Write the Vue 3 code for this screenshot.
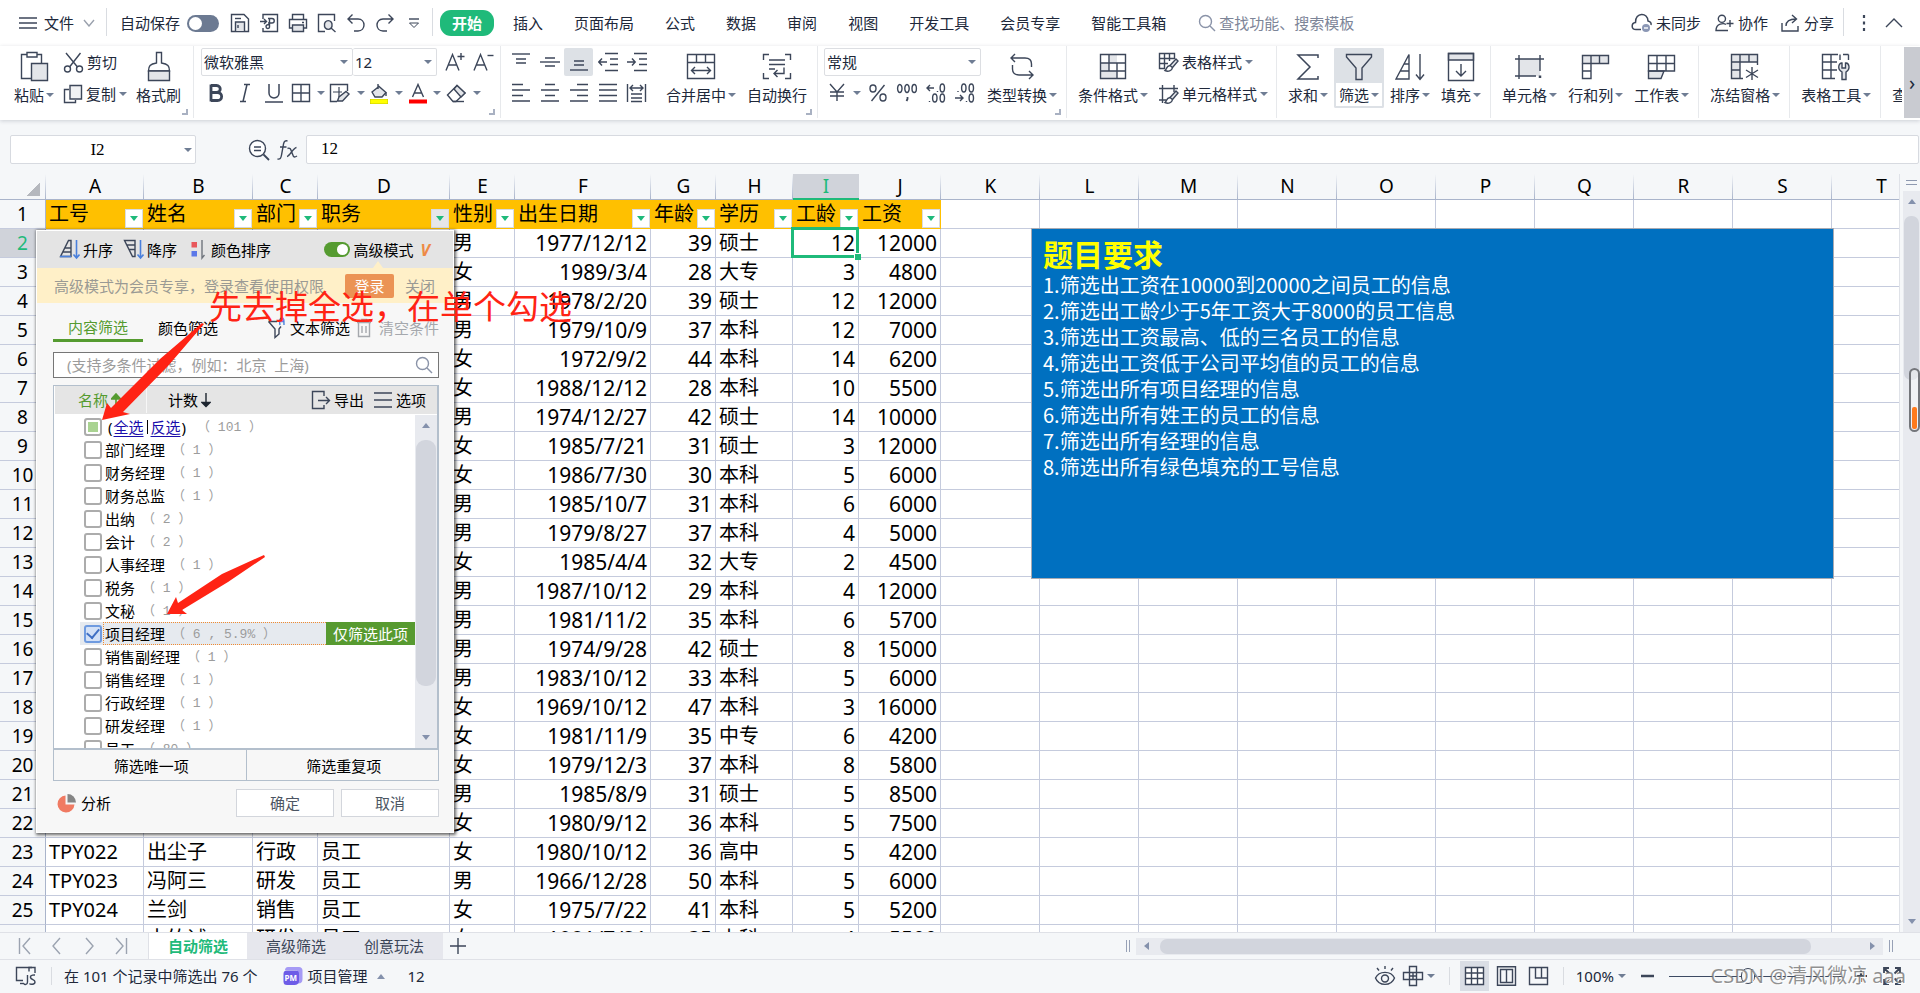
<script setup>
import { h } from 'vue'

const INK = '#3c4659'
const SOFT = '#e3e5e9'
const BLUE = '#4a80dc'

// Each icon: [width, height, [path, fill, stroke, strokeWidth][]]
const icons = {
  menu: [18, 14, [['M0 2H18M0 7H18M0 12H18']]],
  chevDown: [12, 8, [['M1 1L6 7L11 1', 'none', '#9aa1ad']]],
  save: [20, 20, [['M1.5 1.5H14L18.5 6V18.5H1.5Z'], ['M5.5 18V9H14.5V18', SOFT], ['M5 5.5H11'], ['M8 12V15', 'none', INK]]],
  pdf: [20, 20, [['M4 6V1.5H18.5V18.5H4V15'], ['M1 8.5H7M5 6L7.5 8.5L5 11'], ['M9 5.5H13C16 5.5 16 10 13 10H9M10.5 5.5V14C10.5 16 7 16 7 13.5C7 12 9 11.5 10.5 11.5']]],
  print: [20, 20, [['M4.5 6V1.5H15.5V6'], ['M4.5 15H1.5V6.5H18.5V15H15.5'], ['M4.5 12H15.5V18.5H4.5Z', SOFT], ['M14 9.5H16']]],
  preview: [20, 20, [['M8 18.5H1.5V1.5H17.5V8'], ['M15 12A3.8 3.8 0 1 1 7.5 12A3.8 3.8 0 1 1 15 12Z', SOFT], ['M14 15L18.5 19']]],
  undo: [20, 20, [['M6.5 1.5L2 6L6.5 10.5M2 6H12C20 6 20 18 12 18H8']]],
  redo: [20, 20, [['M13.5 1.5L18 6L13.5 10.5M18 6H8C0 6 0 18 8 18H12']]],
  more: [12, 12, [['M1 2H11'], ['M1.5 6H10.5L6 10.5Z', 'none', INK, 1]]],
  search: [18, 18, [['M13.5 7.5A6 6 0 1 1 1.5 7.5A6 6 0 1 1 13.5 7.5Z', 'none', '#8a93a8'], ['M12 12L17 17', 'none', '#8a93a8']]],
  cloud: [22, 20, [['M10 16.5H5C0 16.5 0 10 4.5 9.5C4 -1 17 -1 17 8C19.5 8.5 20.5 10 20 12', 'none', INK, 1.5], ['M19 15A4 4 0 1 1 11 15A4 4 0 1 1 19 15Z', '#8b97b5', 'none'], ['M13 15H17', 'none', '#fff']]],
  people: [19, 18, [['M10.5 4.8A3.6 3.6 0 1 1 3.3 4.8A3.6 3.6 0 1 1 10.5 4.8Z'], ['M13 16.5H1C1 9 9 9 11 10.5'], ['M15 6V13M11.5 9.5H18.5']]],
  share: [19, 18, [['M1 9V17H17V12'], ['M5 12C5 7 8 5 15 5M11 1L15.5 5L11 9']]],
  dots: [4, 18, [['M2 1V4M2 7.5V10.5M2 14V17', 'none', INK, 2.2]]],
  chevUp: [18, 12, [['M1 10L9 2L17 10']]],
  paste: [29, 31, [['M11 27.5H1.5V3.5H7M17 3.5H21.5V12'], ['M7 1.5H17V6H7Z'], ['M11.5 12.5H27.5V29.5H11.5Z', SOFT]]],
  cut: [21, 21, [['M3 1L14.5 15M17.5 1L6.5 15'], ['M7.5 17A3 3 0 1 1 1.5 17A3 3 0 1 1 7.5 17ZM19.5 17A3 3 0 1 1 13.5 17A3 3 0 1 1 19.5 17Z']]],
  copy: [20, 20, [['M6 5.5H1.5V18.5H12.5V16'], ['M7 1.5H18.5V15H7Z', '#f0f1f3']]],
  brush: [26, 31, [['M10.5 1.5H15.5V12C22 13 23.5 15 23.5 20H2.5C2.5 15 4 13 10.5 12Z'], ['M2.5 20H23.5V29.5H2.5Z', SOFT]]],
  fontUp: [20, 20, [['M1 18.5L7.5 2.5L14 18.5M3 13H12'], ['M16 1V8M12.5 4.5H19.5']]],
  fontDown: [22, 20, [['M1 18.5L7.5 2.5L14 18.5M3 13H12'], ['M14.5 3.5H20.5']]],
  bold: [20, 20, [['M5 2.5H10.5C15.5 2.5 15.5 9.5 10.5 9.5H5M5 9.5H11.5C17 9.5 17 17.5 11.5 17.5H5M5 1.5V18.5', 'none', INK, 2.8]]],
  italic: [20, 20, [['M9 1.5H15M5 18.5H11M12 1.5L8 18.5', 'none', INK, 1.5]]],
  underline: [20, 20, [['M5 1V10C5 16.5 15 16.5 15 10V1M1 19H19', 'none', INK, 1.5]]],
  borders: [20, 20, [['M1.5 1.5H18.5V18.5H1.5ZM10 1.5V18.5M1.5 10H18.5']]],
  drawBorder: [22, 20, [['M8 18.5H1.5V1.5H18.5V8'], ['M10 4V14M4 9H13', 'none', INK, 1.2], ['M8.5 18L10 14L17 8.5L20 11L13.5 18Z', SOFT]]],
  fill: [20, 21, [['M9 1V6M3 9L10 3.5L17 9.5L13 14H6Z', SOFT], ['M17 9.5V13'], ['M1 18.5H19', 'none', '#c9c900', 5], ['M1.5 18.5H18.5', 'none', '#ffff00', 4]]],
  color: [18, 21, [['M3.5 14L9 1.5L14.5 14M5.5 10H12.5'], ['M0 18.5H18', 'none', '#ff0000', 4]]],
  eraser: [21, 20, [['M1.5 12L11 2.5L19 10L10 18.5H7Z'], ['M8 6L15 14L19 10L11 2.5Z', SOFT], ['M7 18.5H18']]],
  alignTop: [20, 20, [['M1 2H19'], ['M5 7H15M5 11H15']]],
  alignMid: [20, 20, [['M0 10H20'], ['M5 6H15M5 14H15']]],
  alignBot: [20, 20, [['M1 18H19'], ['M5 9H15M5 13H15']]],
  outdent: [20, 20, [['M7 1.5H20M12 7H20M12 12.5H20M7 18.5H20'], ['M9 10H1M4 6.5L0.8 10L4 13.5']]],
  indent: [20, 20, [['M7 1.5H20M12 7H20M12 12.5H20M7 18.5H20'], ['M0 10H8M5 6.5L8.2 10L5 13.5']]],
  left: [20, 20, [['M1 1.5H12M1 7H19M1 12.5H12M1 18H19']]],
  center: [20, 20, [['M5 1.5H15M1 7H19M5 12.5H15M1 18H19']]],
  right: [20, 20, [['M8 1.5H19M1 7H19M8 12.5H19M1 18H19']]],
  justify: [20, 20, [['M1 1.5H19M1 7H19M1 12.5H19M1 18H19']]],
  distribute: [21, 20, [['M1.5 1V19M19.5 1V19M5 11H16M5 15H16M5 18.5H16'], ['M4 5H17M7 2L4 5L7 8M14 2L17 5L14 8']]],
  merge: [30, 27, [['M1.5 1.5H28.5V25.5H1.5ZM1.5 9.5H28.5M10.5 1.5V9.5M19.5 1.5V9.5'], ['M6 17.5H24M9 14L5.5 17.5L9 21M21 14L24.5 17.5L21 21']]],
  wrap: [30, 27, [['M7 1.5H1.5V7M23 1.5H28.5V7M7 25.5H1.5V20M23 25.5H28.5V20'], ['M7 7H23M7 11.5H23M7 16H13'], ['M22 14.5V20.5H12M15.5 17L12 20.5L15.5 24']]],
  yen: [20, 20, [['M3 1L10 9L17 1M10 9V18M3 9H17M3 13H17']]],
  percent: [20, 20, [['M16.5 2L3.5 18'], ['M8 5.5A3 3.5 0 1 1 2 5.5A3 3.5 0 1 1 8 5.5ZM18 14.5A3 3.5 0 1 1 12 14.5A3 3.5 0 1 1 18 14.5Z']]],
  thousands: [22, 20, [['M6 5.5A2.2 4 0 1 1 1.6 5.5A2.2 4 0 1 1 6 5.5ZM13.2 5.5A2.2 4 0 1 1 8.8 5.5A2.2 4 0 1 1 13.2 5.5ZM20.4 5.5A2.2 4 0 1 1 16 5.5A2.2 4 0 1 1 20.4 5.5Z'], ['M11.5 14V16L10.5 18', 'none', INK, 1.8]]],
  decInc: [20, 20, [['M1 5H8M4 2L1 5L4 8'], ['M11.5 8V9M3.5 18V19'], ['M18.5 5A2.2 4 0 1 1 14.1 5A2.2 4 0 1 1 18.5 5ZM11 15A2.2 4 0 1 1 6.6 15A2.2 4 0 1 1 11 15ZM18.5 15A2.2 4 0 1 1 14.1 15A2.2 4 0 1 1 18.5 15Z']]],
  decDec: [20, 20, [['M0 15H8M5 12L8 15L5 18'], ['M3 8V9M11.5 18V19'], ['M11 5A2.2 4 0 1 1 6.6 5A2.2 4 0 1 1 11 5ZM18.5 5A2.2 4 0 1 1 14.1 5A2.2 4 0 1 1 18.5 5ZM18.5 15A2.2 4 0 1 1 14.1 15A2.2 4 0 1 1 18.5 15Z']]],
  convert: [26, 27, [['M6 1L2 5L6 9M2 5H16C20 5 22.5 7 22.5 11V14'], ['M20 26L24 22L20 18M24 22H10C6 22 3.5 20 3.5 16V12']]],
  condition: [28, 27, [['M1.5 10H10V18H18V25.5H1.5ZM10 1.5H18V10H10Z', SOFT, 'none'], ['M1.5 1.5H26.5V25.5H1.5ZM1.5 10H26.5M1.5 18H26.5M10 1.5V18M18 10V25.5']]],
  tableStyle: [21, 21, [['M7 16.5H1.5V1.5H16.5V7M6.5 1.5V16.5M11.5 1.5V9M1.5 6.5H16.5M1.5 11.5H10'], ['M12 13.5L18 7L20 9L14.5 15.5Z', SOFT], ['M12 13.5C8 14 9 17 7 18.5C10 20 14 19 14.5 15.5']]],
  cellStyle: [21, 21, [['M4.5 1V19M1 4.5H20M16 1V8M1 16H8'], ['M12 13.5L18 7L20 9L14.5 15.5Z', SOFT], ['M12 13.5C8 14 9 17 7 18.5C10 20 14 19 14.5 15.5']]],
  sum: [24, 28, [['M22 5V2H2L14 14L2 26H22V23', 'none', INK, 1.5]]],
  filter: [28, 28, [['M1.5 1.5H26.5V4L17 15V26.5H11V15L1.5 4Z', SOFT]]],
  sort: [30, 28, [['M1 26L14 1.5V26Z M9 11H14M5.5 18H14'], ['M25 1V26M21 21.5L25 26.5L29 21.5']]],
  fillDown: [28, 30, [['M1.5 1.5H26.5V8H1.5Z', SOFT], ['M1.5 1.5H26.5V28.5H1.5Z'], ['M14 12V24M9 19L14 24L19 19']]],
  cell: [31, 26, [['M5 5H26V22H5Z', SOFT, 'none'], ['M5 1V25M26 1V17M1 5H30M1 22H22'], ['M26 21.5V24', 'none', INK, 2.5]]],
  rowcol: [29, 26, [['M1.5 1.5H27.5V9.5H1.5Z', SOFT], ['M1.5 9.5V24.5H10V1.5M18.5 1.5V9.5M1.5 17H10']]],
  worksheet: [29, 26, [['M1.5 17H17L14 24.5H1.5Z', SOFT], ['M1.5 1.5H27.5V17H1.5ZM10 1.5V17M19 1.5V17M1.5 9.5H27.5']]],
  freeze: [30, 28, [['M1.5 1.5H27.5V9H10V25.5H1.5Z', SOFT, 'none'], ['M13 25.5H1.5V1.5H27.5V12M10 1.5V25.5M19 1.5V9M1.5 9H27.5M1.5 17H10'], ['M22 14V27M16 17L28 24.5M28 17L16 24.5']]],
  tools: [30, 28, [['M14 25.5H1.5V1.5H17M10 1.5V25.5M1.5 9H16M1.5 17H16M19 1.5V7M27.5 1.5V7M22 1.5H27.5'], ['M21 26.5V19C15.5 16 18 9.5 21 10V15H24.5V10C28 9.5 30 16 25 19V26.5Z', SOFT]]],
  zoomOut: [22, 22, [['M17.5 9.5A8 8 0 1 1 1.5 9.5A8 8 0 1 1 17.5 9.5Z', '#fff'], ['M6 8H13M6 11.5H13'], ['M15.5 15.5L21 21', 'none', INK, 1.8]]],
  fx: [22, 22, [['M10.5 2C7 1 6.5 4 6 8L4.5 16C4 19.5 3 20.5 0.5 20M3 8H9.5'], ['M10.5 9.5C13.5 8 14 11 15.5 15C16.5 18.5 17.5 18.5 20 17M19.5 8.5C16 9 13 17 10 17.5']]],
  first: [14, 18, [['M1.5 1V17M12 1L5 9L12 17', 'none', '#9ba3b0']]],
  prev: [14, 18, [['M10 1L3 9L10 17', 'none', '#9ba3b0']]],
  next: [14, 18, [['M4 1L11 9L4 17', 'none', '#9ba3b0']]],
  last: [14, 18, [['M12.5 1V17M2 1L9 9L2 17', 'none', '#9ba3b0']]],
  plus: [18, 18, [['M9 1V17M1 9H17']]],
  js: [22, 22, [['M8 15.5H1.5V2.5H17'], ['M5 18.5H9'], ['M14 6.5V2.5H20V8M20 10C20 10 15 9.5 15.5 12.5C16 15 20 14.5 20 17C20 20 15 19.5 14.5 18.5M12.5 10V17C12.5 20 9.5 20 9 18.5']]],
  pm: [20, 20, [['M5 1H16C18 1 19.5 2.5 19.5 4.5V13C19.5 17 17 17.5 15 17.5V7C15 5 14 4 12 4H2C2 2.5 3 1 5 1Z', '#a59af5', 'none'], ['M3.5 4.5H12.5C15 4.5 16 5.5 16 8V15C16 17.5 14 19 11.5 19H4C1.5 19 0.5 18 0.5 15.5V8C0.5 6 1.5 4.5 3.5 4.5Z', '#6d5ce7', 'none']]],
  eye: [22, 22, [['M11 1V4M3 3L5 5.5M19 3L17 5.5'], ['M1.5 13C5 5.5 17 5.5 20.5 13C17 21.5 5 21.5 1.5 13Z'], ['M14.5 13.5A3.5 3.5 0 1 1 7.5 13.5A3.5 3.5 0 1 1 14.5 13.5Z']]],
  cross: [22, 22, [['M7.5 1.5H14.5V7.5H20.5V14.5H14.5V20.5H7.5V14.5H1.5V7.5H7.5ZM7.5 11H14.5M11 7.5V14.5M7.5 7.5H14.5V14.5H7.5Z']]],
  viewGrid: [21, 20, [['M1.5 1.5H19.5V18.5H1.5ZM7.5 1.5V18.5M13.5 1.5V18.5M1.5 7H19.5M1.5 12.5H19.5', '#fff']]],
  viewPage: [21, 20, [['M1.5 0.8H19.5V19.2H1.5Z'], ['M4.5 3.5H16.5V16.5H4.5ZM10.5 3.5V16.5']]],
  viewBreak: [21, 20, [['M1.5 1.5H19.5V18.5H1.5Z'], ['M7.5 1.5V12H19.5M13.5 1.5V12']]],
  minus: [14, 4, [['M0 2H13', 'none', INK, 2.5]]],
  zoomPlus: [14, 14, [['M7 1V13M1 7H13', 'none', INK, 2.2]]],
  expand: [20, 20, [['M2 7V2H7M2 2L7.5 7.5M13 2H18V7M18 2L12.5 7.5M2 13V18H7M2 18L7.5 12.5M18 13V18H13M18 18L12.5 12.5', 'none', INK, 1.8]]],
  asc: [21, 21, [['M1.5 17.5L9.5 1.5H12V17.5ZM6 9H12M4 13H12'], ['M1 17.5H12', 'none', BLUE, 1.6], ['M17.5 1V19M14.5 15.5L17.5 19L20.5 15.5', 'none', BLUE, 1.6]]],
  desc: [21, 21, [['M1.5 1.5H12V17.5H9.5ZM4 6H12M6 10.5H12'], ['M17.5 1V19M14.5 15.5L17.5 19L20.5 15.5', 'none', BLUE, 1.6]]],
  colorSort: [14, 21, [['M0.5 3H6V8.5H0.5Z', '#e8575b', 'none'], ['M0.5 12H6V17.5H0.5Z', '#5b78e8', 'none'], ['M11 1V19L13.5 16', 'none', '#70757d']]],
  textFilter: [20, 22, [['M1.5 4.5H10M1.5 4.5L8 12V20.5L12 17V12L14 9.5'], ['M13 8C12 3 13 1 15 1C17 1 17 3 17 8M13.5 4.5H17', 'none', BLUE]]],
  trash: [16, 20, [['M1 4.5H15M5.5 4V1.5H10.5V4M2.5 4.5V18.5H13.5V4.5M6 8V15M10 8V15', 'none', '#a5a8ad']]],
  export: [20, 20, [['M13 6V1.5H1.5V18.5H13V15'], ['M7 10.5H18.5M15 7L18.5 10.5L15 14']]],
  options: [20, 18, [['M1 2H19M1 9H19M1 16H19']]],
  arrowUp: [10, 14, [['M5 13V3M0.5 6L5 1L9.5 6Z', '#559b30', '#559b30', 1.6]]],
  arrowDown: [10, 16, [['M5 1V13M1 10.5H9L5 14.5Z', '#1d2530', '#1d2530', 1.4]]],
  pie: [20, 20, [['M8.5 2.5V11.5H17.5A8.5 8.5 0 1 1 8.5 2.5Z', '#f07a62', 'none'], ['M10.5 1A8.5 8.5 0 0 1 19 9.5H10.5Z', '#858585', 'none']]],
}

function Icon({ n }) {
  const [w, ht, paths] = icons[n]
  return h('svg', { width: w, height: ht, viewBox: `0 0 ${w} ${ht}`, 'aria-hidden': 'true' },
    paths.map(([d, fill = 'none', stroke = INK, sw = 1.4]) =>
      h('path', { d, fill, stroke, 'stroke-width': sw })))
}
Icon.props = ['n']

const quick = [['save', '保存'], ['pdf', '输出为PDF'], ['print', '打印'], ['preview', '打印预览'], ['undo', '撤销'], ['redo', '恢复'], ['more', '更多']]
const tabs = ['插入', '页面布局', '公式', '数据', '审阅', '视图', '开发工具', '会员专享', '智能工具箱']
const fontTools = [['bold'], ['italic'], ['underline'], ['borders', 1], ['drawBorder', 1], ['fill', 1], ['color', 1], ['eraser', 1]]
const alignTop = ['alignTop', 'alignMid', 'alignBot', 'outdent', 'indent']
const alignBottom = ['left', 'center', 'right', 'justify', 'distribute']
const numTools = [['yen', 1], ['percent'], ['thousands'], ['decInc'], ['decDec']]
const editTools = [['sum', '求和'], ['filter', '筛选'], ['sort', '排序'], ['fillDown', '填充']]
const sheetTools = [['cell', '单元格'], ['rowcol', '行和列'], ['worksheet', '工作表']]

const cols = [
  ['A', 98], ['B', 109], ['C', 65], ['D', 132], ['E', 65], ['F', 136], ['G', 65], ['H', 77], ['I', 66], ['J', 82],
  ...'KLMNOPQRST'.split('').map(c => [c, 99]),
]
const heads = ['工号', '姓名', '部门', '职务', '性别', '出生日期', '年龄', '学历', '工龄', '工资']
const records = `|||,男,1977/12/12,39,硕士,12,12000
|||,女,1989/3/4,28,大专,3,4800
|||,男,1978/2/20,39,硕士,12,12000
|||,男,1979/10/9,37,本科,12,7000
|||,女,1972/9/2,44,本科,14,6200
|||,女,1988/12/12,28,本科,10,5500
|||,男,1974/12/27,42,硕士,14,10000
|||,女,1985/7/21,31,硕士,3,12000
|||,女,1986/7/30,30,本科,5,6000
|||,男,1985/10/7,31,本科,6,6000
|||,男,1979/8/27,37,本科,4,5000
|||,女,1985/4/4,32,大专,2,4500
|||,男,1987/10/12,29,本科,4,12000
|||,男,1981/11/2,35,本科,6,5700
|||,男,1974/9/28,42,硕士,8,15000
|||,男,1983/10/12,33,本科,5,6000
|||,女,1969/10/12,47,本科,3,16000
|||,女,1981/11/9,35,中专,6,4200
|||,女,1979/12/3,37,本科,8,5800
|||,男,1985/8/9,31,硕士,5,8500
|||,女,1980/9/12,36,本科,5,7500
TPY022|出尘子|行政|员工,女,1980/10/12,36,高中,5,4200
TPY023|冯阿三|研发|员工,男,1966/12/28,50,本科,5,6000
TPY024|兰剑|销售|员工,女,1975/7/22,41,本科,5,5200
TPY025|木竹诚|研发|员工,女,1981/7/21,35,本科,4,5500`.split('\n').map(r => {
  const [who, ...rest] = r.split(',')
  return [...who.split('|'), ...rest]
})
const isNum = i => i === 5 || i === 6 || i === 8 || i === 9

const options = [
  ['部门经理', '1'], ['财务经理', '1'], ['财务总监', '1'], ['出纳', '2'], ['会计', '2'], ['人事经理', '1'],
  ['税务', '1'], ['文秘', '1'], ['项目经理', '6 , 5.9%', true], ['销售副经理', '1'], ['销售经理', '1'],
  ['行政经理', '1'], ['研发经理', '1'], ['员工', '80'],
]
const tasks = [
  '1.筛选出工资在10000到20000之间员工的信息',
  '2.筛选出工龄少于5年工资大于8000的员工信息',
  '3.筛选出工资最高、低的三名员工的信息',
  '4.筛选出工资低于公司平均值的员工的信息',
  '5.筛选出所有项目经理的信息',
  '6.筛选出所有姓王的员工的信息',
  '7.筛选出所有经理的信息',
  '8.筛选出所有绿色填充的工号信息',
]
</script>

<template>
  <div class="app">
    <header class="menubar">
      <button class="file"><Icon n="menu" /><span>文件</span><Icon n="chevDown" /></button>
      <i class="vline"></i>
      <label class="autosave">自动保存<input type="checkbox" class="switch" /></label>
      <div class="quick">
        <button v-for="[n, t] in quick" :key="n" :aria-label="t"><Icon :n="n" /></button>
      </div>
      <i class="vline"></i>
      <nav class="tabs">
        <button class="home">开始</button>
        <button v-for="t in tabs" :key="t" class="tab">{{ t }}</button>
      </nav>
      <label class="find"><Icon n="search" /><input type="text" placeholder="查找功能、搜索模板" aria-label="查找功能" /></label>
      <div class="account">
        <button class="cloud"><Icon n="cloud" />未同步</button>
        <button class="people"><Icon n="people" />协作</button>
        <button class="share"><Icon n="share" />分享</button>
        <i class="vline"></i>
        <button class="dots" aria-label="更多"><Icon n="dots" /></button>
        <button aria-label="收起"><Icon n="chevUp" /></button>
      </div>
    </header>

    <section class="ribbon">
      <div class="group clip">
        <button class="big"><span class="pic"><Icon n="paste" /></span><span class="cap">粘贴<i class="caret"></i></span></button>
        <div class="stack">
          <button class="line"><Icon n="cut" />剪切</button>
          <button class="line"><Icon n="copy" />复制<i class="caret"></i></button>
        </div>
        <button class="big"><span class="pic"><Icon n="brush" /></span><span class="cap">格式刷</span></button>
        <i class="corner"></i>
      </div>
      <div class="group font">
        <div class="stack">
          <div class="tools">
            <span class="pick family"><select aria-label="字体"><option>微软雅黑</option></select><i class="caret"></i></span>
            <span class="pick size"><select aria-label="字号"><option>12</option></select><i class="caret"></i></span>
            <button class="tool first" aria-label="增大字号"><Icon n="fontUp" /></button>
            <button class="tool" aria-label="减小字号"><Icon n="fontDown" /></button>
          </div>
          <div class="tools">
            <button v-for="[n, c] in fontTools" :key="n" class="tool" :class="{ wide: c }" :aria-label="n"><Icon :n="n" /><i v-if="c" class="caret"></i></button>
          </div>
        </div>
        <i class="corner"></i>
      </div>
      <div class="group align">
        <div class="stack">
          <div class="tools"><button v-for="n in alignTop" :key="n" class="tool" :class="{ on: n === 'alignBot' }" :aria-label="n"><Icon :n="n" /></button></div>
          <div class="tools"><button v-for="n in alignBottom" :key="n" class="tool" :aria-label="n"><Icon :n="n" /></button></div>
        </div>
        <button class="big after"><span class="pic"><Icon n="merge" /></span><span class="cap">合并居中<i class="caret"></i></span></button>
        <button class="big"><span class="pic"><Icon n="wrap" /></span><span class="cap">自动换行</span></button>
        <i class="corner"></i>
      </div>
      <div class="group">
        <div class="stack">
          <span class="pick format"><select aria-label="数字格式"><option>常规</option></select><i class="caret"></i></span>
          <div class="tools"><button v-for="[n, c] in numTools" :key="n" class="tool" :class="{ wide: c }" :aria-label="n"><Icon :n="n" /><i v-if="c" class="caret"></i></button></div>
        </div>
        <button class="big"><span class="pic"><Icon n="convert" /></span><span class="cap">类型转换<i class="caret"></i></span></button>
        <i class="corner"></i>
      </div>
      <div class="group">
        <button class="big"><span class="pic"><Icon n="condition" /></span><span class="cap">条件格式<i class="caret"></i></span></button>
        <div class="stack">
          <button class="line"><Icon n="tableStyle" />表格样式<i class="caret"></i></button>
          <button class="line"><Icon n="cellStyle" />单元格样式<i class="caret"></i></button>
        </div>
      </div>
      <div class="group">
        <button v-for="[n, t] in editTools" :key="n" class="big" :class="{ active: n === 'filter' }"><span class="pic"><Icon :n="n" /></span><span class="cap">{{ t }}<i class="caret"></i></span></button>
      </div>
      <div class="group">
        <button v-for="[n, t] in sheetTools" :key="n" class="big"><span class="pic"><Icon :n="n" /></span><span class="cap">{{ t }}<i class="caret"></i></span></button>
      </div>
      <div class="group"><button class="big"><span class="pic"><Icon n="freeze" /></span><span class="cap">冻结窗格<i class="caret"></i></span></button></div>
      <div class="group"><button class="big"><span class="pic"><Icon n="tools" /></span><span class="cap">表格工具<i class="caret"></i></span></button></div>
      <div class="group rest"><button class="big"><span class="pic"></span><span class="cap">查找</span></button></div>
      <button class="scroller" aria-label="向右滚动">›</button>
    </section>

    <section class="formula">
      <span class="namebox"><input type="text" value="I2" aria-label="名称框" /><i class="caret"></i></span>
      <button class="zo" aria-label="浏览公式结果"><Icon n="zoomOut" /></button>
      <button class="fxb" aria-label="插入函数"><Icon n="fx" /></button>
      <input class="fbar" type="text" value="12" aria-label="编辑栏" />
    </section>

    <main class="sheet">
      <div class="canvas">
        <table>
          <colgroup><col class="num" /><col v-for="[c, w] in cols" :key="c" :style="{ width: w + 'px' }" /></colgroup>
          <thead>
            <tr>
              <th class="all"></th>
              <th v-for="[c] in cols" :key="c" :class="{ cur: c === 'I' }">{{ c }}</th>
            </tr>
          </thead>
          <tbody>
            <tr>
              <th>1</th>
              <td v-for="(t, i) in heads" :key="t" class="title">
                <div><span>{{ t }}</span><button :class="{ used: i === 3 }" :aria-label="'筛选' + t"><i></i></button></div>
              </td>
              <td v-for="k in 10" :key="k"></td>
            </tr>
            <tr v-for="(r, ri) in records" :key="ri">
              <th :class="{ cur: ri === 0 }">{{ ri + 2 }}</th>
              <td v-for="(v, i) in r" :key="i" :class="{ n: isNum(i), sel: ri === 0 && i === 8 }">{{ v }}</td>
              <td v-for="k in 10" :key="'e' + k"></td>
            </tr>
          </tbody>
        </table>

        <article class="note">
          <h2>题目要求</h2>
          <p v-for="t in tasks" :key="t">{{ t }}</p>
        </article>

        <section class="popup">
          <div class="p-sort">
            <button><Icon n="asc" />升序</button>
            <button><Icon n="desc" />降序</button>
            <button><Icon n="colorSort" />颜色排序</button>
            <label><input type="checkbox" class="switch green" checked />高级模式</label>
            <b>V</b>
          </div>
          <div class="p-tip">
            <span>高级模式为会员专享，登录查看使用权限</span>
            <button class="login">登录</button>
            <button class="close">关闭</button>
          </div>
          <div class="p-tabs">
            <button class="on">内容筛选</button>
            <button>颜色筛选</button>
            <button class="tf"><Icon n="textFilter" />文本筛选</button>
            <button class="clear"><Icon n="trash" />清空条件</button>
          </div>
          <label class="p-find"><input type="text" placeholder="(支持多条件过滤，例如：北京  上海)" aria-label="搜索" /><Icon n="search" /></label>
          <div class="p-list">
            <div class="p-head">
              <button class="name">名称<Icon n="arrowUp" /></button>
              <button class="count">计数<Icon n="arrowDown" /></button>
              <button class="exp"><Icon n="export" />导出</button>
              <button><Icon n="options" />选项</button>
            </div>
            <div class="p-body">
              <ul>
                <li>
                  <input type="checkbox" class="some" aria-label="全选" />
                  <span class="links">(<a href="#">全选</a><s></s><a href="#">反选</a>)</span><em>（ 101 ）</em>
                </li>
                <li v-for="[t, c, on] in options" :key="t" :class="{ picked: on }">
                  <input :id="'o-' + t" type="checkbox" :checked="on" />
                  <label :for="'o-' + t">{{ t }}<em>（ {{ c }} ）</em></label>
                  <button v-if="on">仅筛选此项</button>
                </li>
              </ul>
              <div class="p-bar"><i class="up"></i><span></span><i class="down"></i></div>
            </div>
          </div>
          <div class="p-two"><button>筛选唯一项</button><button>筛选重复项</button></div>
          <footer><button class="stat"><Icon n="pie" />分析</button><button class="box">确定</button><button class="box">取消</button></footer>
        </section>

        <p class="remark">先去掉全选，在单个勾选</p>
        <svg class="arrows" width="420" height="480" viewBox="0 174 420 480" aria-hidden="true">
          <path d="M202 323L160 359L111 408L107 403L102 420L130 414L123 412L168 366L204 324Z" fill="#ff2314" />
          <path d="M264 555L222 574L178 603L176 597L167 614L187 614L182 610L228 582L265 557Z" fill="#ff2314" />
        </svg>
      </div>
      <aside class="vbar">
        <span class="split"></span>
        <div class="track"><i class="up"></i><span class="thumb"></span><i class="down"></i></div>
        <span class="gauge"><i></i></span>
      </aside>
    </main>

    <section class="sheetbar">
      <div class="nav">
        <button v-for="n in ['first', 'prev', 'next', 'last']" :key="n" :aria-label="n"><Icon :n="n" /></button>
      </div>
      <button class="st on">自动筛选</button>
      <button class="st">高级筛选</button>
      <button class="st">创意玩法</button>
      <button class="add" aria-label="新建工作表"><Icon n="plus" /></button>
      <div class="hbar">
        <i class="grip"></i>
        <div class="track"><i class="lt"></i><span class="thumb"></span><i class="rt"></i></div>
        <i class="grip"></i>
      </div>
    </section>

    <footer class="status">
      <button class="js" aria-label="宏"><Icon n="js" /></button>
      <i class="vline"></i>
      <span class="info">在 101 个记录中筛选出 76 个</span>
      <button class="pm"><span class="pmi"><Icon n="pm" /><b>PM</b></span>项目管理<i class="up"></i></button>
      <span>12</span>
      <div class="views">
        <button aria-label="护眼模式"><Icon n="eye" /></button>
        <button class="rd" aria-label="阅读模式"><Icon n="cross" /><i class="caret"></i></button>
        <i class="vline"></i>
        <button class="v on" aria-label="普通视图"><Icon n="viewGrid" /></button>
        <button class="v" aria-label="页面布局"><Icon n="viewPage" /></button>
        <button class="v" aria-label="分页预览"><Icon n="viewBreak" /></button>
        <i class="vline"></i>
        <button class="pct">100%<i class="caret"></i></button>
        <button aria-label="缩小"><Icon n="minus" /></button>
        <input type="range" min="0" max="200" value="90" aria-label="缩放" />
        <button aria-label="放大"><Icon n="zoomPlus" /></button>
        <button class="full" aria-label="全屏"><Icon n="expand" /></button>
      </div>
      <span class="mark">CSDN @清风微凉 aaa</span>
    </footer>
  </div>
</template>

<style>
html, body { margin: 0; overflow: hidden; }
</style>

<style scoped>
* { box-sizing: border-box; }
.app {
  height: 100vh; display: flex; flex-direction: column; overflow: hidden; position: relative;
  font: 15px/20px "Noto Sans", "Noto Sans CJK SC", sans-serif; color: #20283a; background: #f5f7f9;
}
button, input, select { font: inherit; color: inherit; margin: 0; padding: 0; border: 0; background: none; white-space: nowrap; outline: none; }
button { display: flex; align-items: center; flex: none; }
select, input { appearance: none; min-width: 0; }
svg { flex: none; display: block; }
p, h2, ul { margin: 0; padding: 0; }
em, i { font-style: normal; }
.caret { flex: none; border: 4px solid transparent; border-top-color: #6f7d94; border-bottom: 0; width: 8px; height: 4px; }
.vline { flex: none; width: 1px; background: #d9dce1; align-self: stretch; }

.menubar { flex: none; height: 46px; display: flex; align-items: center; padding: 0 17px 0 19px; background: #fff; }
.menubar > .vline, .account .vline { margin: 8px 0 10px; height: 28px; }
.file { gap: 7px; margin-right: 11px; }
.file span { margin-right: 2px; }
.autosave { display: flex; align-items: center; gap: 7px; margin-left: 13px; white-space: nowrap; }
.switch { width: 32px; height: 17px; border-radius: 9px; background: #6c7a92; display: flex; align-items: center; padding: 2px; }
.switch::before { content: ""; width: 13px; height: 13px; border-radius: 50%; background: #fff; }
.switch.green { width: 26px; height: 15px; background: #559b30; justify-content: flex-end; padding: 2px; }
.switch.green::before { width: 11px; height: 11px; }
.quick { display: flex; margin: 0 4px 0 6px; }
.quick button { width: 29px; justify-content: center; }
.tabs { display: flex; align-items: center; margin-left: 7px; gap: 1px; }
.tab { padding: 0 15px; height: 26px; }
.home { padding: 0 12px; height: 26px; border-radius: 11px; background: #1fba7a; color: #fff; font-weight: 700; margin-right: 3px; }
.find { display: flex; align-items: center; gap: 3px; margin-left: 17px; }
.find input { width: 150px; }
.find input::placeholder { color: #7d8598; opacity: 1; }
.account { display: flex; align-items: center; margin-left: auto; }
.account button { gap: 3px; }
.account .people { margin-left: 14px; gap: 4px; }
.account .share { margin: 0 9px 0 13px; gap: 4px; }
.account .dots { margin: 0 19px 0 18px; }

.ribbon { flex: none; height: 74px; display: flex; background: #fff; position: relative; z-index: 2; box-shadow: 0 1px 4px rgba(60, 70, 90, .22); }
.group { flex: none; display: flex; gap: 1px; height: 72px; padding: 2px 4px 0 6px; border-right: 1px solid #e7e9ec; position: relative; }
.group.clip { padding-left: 9px; width: 194px; gap: 0; }
.group.rest { padding-right: 0; border: 0; flex: 1; min-width: 0; overflow: hidden; }
.corner { position: absolute; right: 5px; bottom: 3px; width: 6px; height: 6px; border: solid #a9b1c2; border-width: 0 2px 2px 0; }
.big { flex-direction: column; padding: 0 5px; height: 60px; }
.pic { height: 35px; display: flex; align-items: center; justify-content: center; padding-top: 2px; }
.cap { height: 25px; display: flex; align-items: center; gap: 2px; padding-bottom: 2px; }
.active { background: #dde1e6; border-radius: 2px; box-shadow: inset 0 0 0 2px #dde1e6; position: relative; }
.active .cap { background: #fff; margin: 0 -3px 2px; padding: 0 3px; height: 23px; }
.stack { display: flex; flex-direction: column; gap: 3px; }
.line { height: 28px; gap: 3px; padding: 0 4px; }
.line:last-child { padding-top: 2px; }
.tools { display: flex; height: 28px; align-items: center; }
.tool { width: 29px; height: 28px; justify-content: center; }
.tool.wide { width: 39px; gap: 6px; }
.tool.on { background: #dde1e6; border-radius: 2px; }
.tool.first { margin-left: 3px; }
.pick { display: flex; align-items: center; height: 28px; border: 1px solid #dcdee2; border-radius: 2px; padding-right: 4px; }
.pick select { flex: 1; height: 26px; padding-left: 2px; }
.family { width: 152px; }
.size { width: 84px; border-left: 0; }
.format { width: 157px; }
.font { width: 307px; padding-left: 7px; }
.align { padding-left: 5px; width: 317px; }
.after { margin-left: 9px; }
.scroller { width: 16px; height: 71px; margin: 1px 0 0 2px; background: #c9cbd1; justify-content: center; font-size: 20px; }

.formula { flex: none; display: flex; align-items: center; height: 54px; padding: 5px 1px 0 10px; }
.namebox { display: flex; align-items: center; width: 186px; height: 29px; background: #fff; border: 1px solid #d7dae0; border-radius: 2px; padding-right: 3px; }
.namebox input { flex: 1; text-align: center; }
.namebox input, .fbar { font: 17px/20px "Liberation Serif", serif; color: #000; }
.zo { margin-left: 52px; }
.fxb { margin: 0 7px; }
.fbar { flex: 1; height: 29px; background: #fff; border: 1px solid #d7dae0; border-radius: 2px; padding: 0 0 2px 14px; }

.sheet { flex: 1; min-height: 0; display: flex; }
.canvas { flex: 1; min-width: 0; position: relative; overflow: hidden; background: #fff; border-right: 1px solid #dfe2e8; }
table { table-layout: fixed; border-collapse: separate; border-spacing: 0; width: 1931px; }
.num { width: 46px; }
thead tr { height: 26px; }
tbody tr { height: 29px; }
th, td { padding: 0 3px; border: solid #c5cbdd; border-width: 0 1px 1px 0; font-size: 20px; line-height: 24px; font-weight: 400; white-space: nowrap; color: #000; text-align: left; }
th { text-align: center; font-size: 19px; background: #f5f7f9; }
thead th { padding-bottom: 1px; border-right: 0; border-bottom-color: #a9b4cb; background: linear-gradient(#f5f7f9, #a9b4cb) right / 1px 100% no-repeat #f5f7f9; }
tbody th { border-right-color: #a9b4cb; padding: 0; }
thead .all { background: linear-gradient(135deg, transparent 50%, #b5b8be 50%) 26px 9px / 14px 13px no-repeat, linear-gradient(#f5f7f9, #a9b4cb) right / 1px 100% no-repeat #f5f7f9; }
thead .cur { background: #d0d3da; color: #1fba7a; border-bottom: 2px solid #1fba7a; padding-bottom: 0; }
tbody .cur { background: #d0d3da; color: #1fba7a; }
.n { text-align: right; font-size: 21px; }
.title { background: #ffc000; border-color: #ffc000; padding-right: 0; }
.title div { display: flex; height: 28px; align-items: center; justify-content: space-between; }
.title button { align-self: flex-end; width: 18px; height: 19px; margin-left: -4px; background: #fff; border: 1px solid #d9dce0; justify-content: center; }
.title .used { background: #e6e6e8; }
.title button i { border: 4px solid transparent; border-top: 5px solid #1fba7a; border-bottom: 0; }
.sel { position: relative; }
.sel::before { content: ""; position: absolute; inset: -2px -1px -1px -2px; border: 3px solid #1fba7a; }
.sel::after { content: ""; position: absolute; right: -3px; bottom: -3px; width: 6px; height: 6px; background: #1fba7a; border: solid #fff; border-width: 1px 0 0 1px; }

.note { position: absolute; left: 1031px; top: 54px; width: 803px; height: 351px; padding: 5px 11px; background: #0070c0; border: 1px solid #a8aab2; color: #fff; font-family: "Noto Sans CJK SC", sans-serif; }
.note h2 { font-size: 30px; line-height: 38px; color: #ff0; }
.note p { font-size: 20px; line-height: 26px; }

.popup { position: absolute; left: 36px; top: 56px; width: 418px; background: #f7f7f7; border: 1px solid #fff; box-shadow: 1px 1px 3px 1px rgba(0, 0, 0, .6); color: #000; }
.p-sort { height: 37px; background: #e4e4e4; display: flex; align-items: center; padding: 0 23px 0 22px; }
.p-sort button { gap: 3px; margin-right: 10px; }
.p-sort button:nth-child(3) { gap: 6px; margin-left: 4px; }
.p-sort label { display: flex; align-items: center; gap: 4px; margin-left: auto; }
.p-sort b { color: #ee8a45; font-style: italic; font-size: 16px; margin-left: 7px; }
.p-tip { height: 35px; background: #fff0c8; display: flex; align-items: center; padding: 0 18px 0 17px; color: #9a9a94; position: relative; }
.p-tip::before { content: ""; position: absolute; left: 336px; top: -7px; border: 5px solid transparent; border-bottom: 7px solid #fff0c8; border-top: 0; }
.login { width: 49px; height: 24px; justify-content: center; margin-left: auto; background: #eb9355; color: #fff; border-radius: 2px; }
.close { margin-left: 11px; }
.p-tabs { height: 39px; display: flex; align-items: center; padding: 10px 14px 0 16px; }
.p-tabs button { height: 28px; padding: 0 15px; }
.p-tabs .on { color: #559b30; border-bottom: 3px solid #559b30; padding-top: 2px; }
.p-tabs .tf { margin-left: auto; gap: 3px; padding: 0; }
.p-tabs .clear { color: #a5a8ad; gap: 7px; margin-left: 6px; padding: 0; }
.p-find { height: 26px; margin: 10px 14px 0 16px; border: 1px solid #767676; background: #fff; display: flex; align-items: center; padding: 0 5px 0 13px; }
.p-find input { flex: 1; white-space: pre; }
.p-find input::placeholder { color: #9c9c9c; opacity: 1; }
.p-list { margin: 7px 14px 0 16px; border: solid #b3bfcc; border-width: 1px 2px 2px 1px; background: #fff; }
.p-head { height: 28px; display: flex; align-items: center; margin: 0 0 1px 1px; background: #e5e5e5; padding-right: 11px; }
.p-head button { gap: 3px; }
.name { color: #559b30; padding-left: 23px; width: 92px; height: 25px; border-right: 1px solid #f7f7f7; }
.count { margin-left: 21px; }
.exp { margin: 0 9px 0 auto; }
.p-body { display: flex; height: 333px; }
.p-body ul { flex: 1; min-width: 0; list-style: none; overflow: hidden; }
li { display: flex; align-items: center; height: 23px; padding-left: 30px; color: #000; }
li input { flex: none; width: 18px; height: 18px; border: 2px solid #acacac; border-radius: 3px; background: #fff; margin-right: 3px; }
li .some { background: #a9d391; box-shadow: inset 0 0 0 2px #fff; }
li label { flex: 1; display: flex; align-items: center; }
.links { display: flex; align-items: center; padding-left: 3px; gap: 1px; margin-right: 4px; }
.links s { width: 1px; height: 14px; margin: 0 2px; background: #000; }
em { font-family: "Liberation Mono", "Noto Sans CJK SC", monospace; font-size: 13px; color: #9c9c9c; margin-left: 7px; padding-top: 2px; white-space: pre; }
li a { color: #1a0dab; text-underline-offset: 3px; }
.picked { padding-left: 4px; margin-left: 26px; background: #e6eaef; }
.picked input { border-color: #6f9be0; background: #d3e1f7; display: flex; align-items: center; justify-content: center; margin-right: 1px; }
.picked input::before { content: ""; width: 6px; height: 10px; border: solid #3f6fc4; border-width: 0 2px 2px 0; transform: rotate(40deg); margin-top: -3px; }
.picked label { height: 23px; border: 1px dotted #f08a30; border-right: 0; padding-left: 1px; }
.picked button { width: 89px; height: 23px; justify-content: center; background: #579a30; color: #fff; }
.p-bar { width: 22px; background: #e8eaef; display: flex; flex-direction: column; align-items: center; padding: 8px 1px; }
.p-bar span { width: 20px; height: 246px; margin-top: 12px; border-radius: 9px; background: #d2d5dd; }
.up, .down { flex: none; border: 4px solid transparent; }
.up { border-bottom: 5px solid #8491ac; border-top: 0; }
.down { border-top: 5px solid #8491ac; border-bottom: 0; margin-top: auto; }
.p-two { display: flex; margin: 0 14px 0 16px; border: solid #b3bfcc; border-width: 0 1px 1px; }
.p-two button { flex: 1; height: 30px; padding: 2px 0 0 3px; justify-content: center; }
.p-two button + button { border-left: 1px solid #b3bfcc; }
.popup footer { display: flex; padding: 8px 14px 15px 20px; }
.stat { gap: 4px; margin-right: auto; }
.box { width: 98px; height: 28px; margin-left: 7px; justify-content: center; background: #fff; border: 1px solid #d3d6dc; color: #4c5563; }

.remark { position: absolute; left: 209px; top: 111px; font-size: 33px; line-height: 44px; color: #ff2314; white-space: nowrap; }
.arrows { position: absolute; left: 0; top: 0; }

.vbar { flex: none; width: 20px; padding-left: 3px; display: flex; flex-direction: column; position: relative; }
.split { height: 5px; margin: 6px 3px; border: solid #8e99b0; border-width: 1px 0; }
.vbar .track { flex: 1; display: flex; flex-direction: column; align-items: center; background: #e8eaef; padding: 8px 0; }
.vbar .thumb { width: 15px; height: 164px; margin-top: 12px; border-radius: 7px; background: #d2d5dd; }
.gauge { position: absolute; right: 0; top: 194px; width: 11px; height: 64px; border: 2px solid #74767b; border-radius: 6px; background: rgba(255, 255, 255, .4); padding: 1px; display: flex; align-items: flex-end; }
.gauge i { width: 5px; height: 22px; border-radius: 2px; background: #ff7a1c; }

.sheetbar { flex: none; height: 28px; display: flex; border: solid #dfe1e7; border-width: 1px 0; background: #f5f7f9; }
.nav { display: flex; width: 149px; padding: 0 18px; gap: 18px; border-right: 1px solid #dfe1e7; }
.st { width: 98px; justify-content: center; background: #e6e7ed; color: #3b4557; padding-bottom: 0; }
.st.on { background: #fff; color: #1fba7a; font-weight: 700; }
.add { margin-left: 6px; }
.hbar { margin-left: auto; width: 794px; display: flex; align-items: center; padding-right: 27px; gap: 6px; }
.hbar .track { flex: 1; height: 17px; display: flex; align-items: center; background: #e8eaef; padding: 0 8px; }
.hbar .thumb { flex: none; width: 89%; height: 15px; margin-left: 11px; border-radius: 7px; background: #d2d5dd; }
.grip { width: 4px; height: 12px; border: solid #97a1b6; border-width: 0 1px; }
.lt, .rt { flex: none; border: 4px solid transparent; }
.lt { border-right: 5px solid #8491ac; border-left: 0; }
.rt { border-left: 5px solid #8491ac; border-right: 0; margin-left: auto; }

.status { flex: none; height: 33px; display: flex; align-items: center; padding: 0 18px 1px 15px; position: relative; }
.status .vline { height: 18px; align-self: center; }
.js { margin-right: 14px; }
.info { margin: 0 25px 0 12px; white-space: nowrap; }
.pm { gap: 5px; margin-right: 23px; }
.pm .up { margin-left: 4px; }
.pmi { position: relative; }
.pmi b { position: absolute; left: 2px; top: 7px; font-size: 8px; line-height: 10px; color: #fff; }
.views { margin-left: auto; display: flex; align-items: center; }
.rd { gap: 3px; margin: 0 14px 0 6px; }
.v { width: 29px; height: 30px; justify-content: center; margin-left: 3px; }
.v.on { background: #dadee5; margin-left: 10px; }
.v + .vline { margin: 0 12px 0 10px; }
.pct { gap: 4px; margin-right: 15px; }
.views input { width: 173px; height: 20px; margin: 0 12px 0 14px; background: linear-gradient(#3c4a63, #3c4a63) center / 100% 1px no-repeat; }
.views input::-webkit-slider-thumb { appearance: none; width: 14px; height: 16px; border: 1px solid #3c4659; border-radius: 7px; background: #f5f7f9; }
.full { margin-left: 14px; }
.mark { position: absolute; right: 14px; top: 3px; font-size: 20px; line-height: 26px; color: rgba(110, 110, 110, .75); white-space: nowrap; text-shadow: 1px 1px 0 #fff; }
</style>
